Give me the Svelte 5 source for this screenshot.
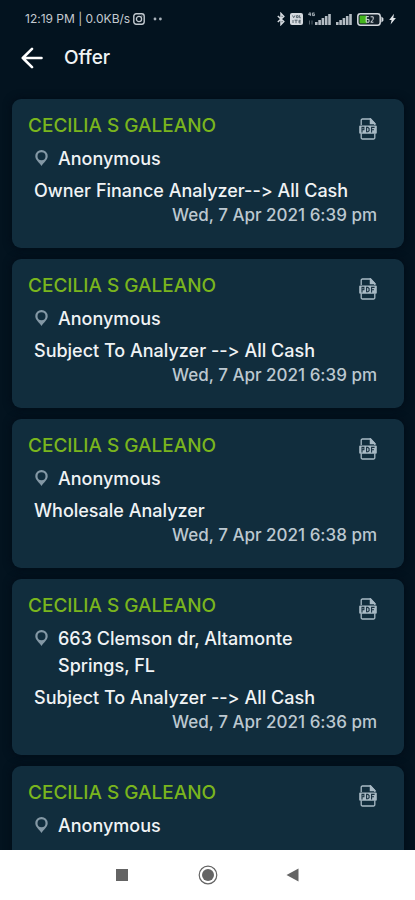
<script>
  const offers = [
    { id: 1, name: 'CECILIA S GALEANO', place: 'Anonymous', plan: 'Owner Finance Analyzer--> All Cash', date: 'Wed, 7 Apr 2021 6:39 pm' },
    { id: 2, name: 'CECILIA S GALEANO', place: 'Anonymous', plan: 'Subject To Analyzer --> All Cash', date: 'Wed, 7 Apr 2021 6:39 pm' },
    { id: 3, name: 'CECILIA S GALEANO', place: 'Anonymous', plan: 'Wholesale Analyzer', date: 'Wed, 7 Apr 2021 6:38 pm' },
    { id: 4, name: 'CECILIA S GALEANO', place: '663 Clemson dr, Altamonte Springs, FL', plan: 'Subject To Analyzer --> All Cash', date: 'Wed, 7 Apr 2021 6:36 pm' },
    { id: 5, name: 'CECILIA S GALEANO', place: 'Anonymous', plan: 'Owner Finance Analyzer--> All Cash', date: 'Wed, 7 Apr 2021 6:36 pm' },
  ];
  const bars = [3, 5, 7, 9, 11];
</script>

{#snippet signal()}
  <svg width="16" height="12" viewBox="0 0 16 12" aria-hidden="true">
    {#each bars as h, k (k)}<rect x={k * 3.3} y={12 - h} width="2.6" height={h} fill="#b4bcc3" />{/each}
  </svg>
{/snippet}

<div class="screen">
  <div class="status">
    <span class="clock">12:19 PM | 0.0KB/s</span>
    <svg class="cam" width="12" height="12" viewBox="0 0 12 12" fill="none" stroke="#c3cad0" aria-hidden="true">
      <rect x="0.8" y="0.8" width="10.4" height="10.4" rx="2.4" stroke-width="1.4" />
      <circle cx="6" cy="6" r="2.6" stroke-width="1.3" />
      <path d="M8.4 3h1" stroke-width="1.2" />
    </svg>
    <svg class="more" width="10" height="4" viewBox="0 0 10 4" fill="#a9b2ba" aria-hidden="true">
      <circle cx="2" cy="2" r="1.4" /><circle cx="7.4" cy="2" r="1.4" />
    </svg>
    <div class="icons">
      <svg width="8" height="14" viewBox="0 0 8 14" fill="none" stroke="#d5dadf" stroke-width="1.5" aria-hidden="true">
        <path d="M0.8 4l6 5.6L4 12.5v-11l2.8 2.9L0.8 10" />
      </svg>
      <svg width="13" height="12" viewBox="0 0 13 12" aria-hidden="true">
        <rect width="13" height="12" rx="2" fill="#d5dadf" />
        <path d="M2.5 2.5l1.2 2.2 1.2-2.2M6.4 2.7h1.8v1.9H6.4zM9.6 2.2v2.6h1.3M3 7v3M4.6 7.2h3M6 7.2v3M10.8 7.3H9v2.6h1.8M9 8.6h1.6" fill="none" stroke="#4b5963" stroke-width="0.9" />
      </svg>
      <div class="sim">
        <svg width="7" height="14" viewBox="0 0 7 14" fill="none" stroke="#a3adb5" stroke-width="1" aria-hidden="true">
          <path d="M1.8 0.4L0.5 2.6h2.4M2.3 0.6v3.4M6.5 1H4.4v2.6h2.1V2.2H5.4" />
          <path d="M1.5 12.5v-4M4 8.5v4" stroke="#56636d" />
        </svg>
        {@render signal()}
      </div>
      {@render signal()}
      <svg width="27" height="13" viewBox="0 0 27 13" aria-hidden="true">
        <rect x="0.8" y="0.8" width="22.4" height="11.4" rx="2.6" fill="#14212b" stroke="#d5dadf" stroke-width="1.5" />
        <path d="M24.4 3.6l2 1.6v2.6l-2 1.6z" fill="#d5dadf" />
        <rect x="2.6" y="2.6" width="7.4" height="7.8" fill="#43b51c" />
        <path d="M11.8 3.6H9.2v5.6h2.8V6.4H9.2M13.6 3.8h2.6v2.4l-2.4 3h2.6" fill="none" stroke="#d5dadf" stroke-width="1" />
      </svg>
      <svg width="7" height="12" viewBox="0 0 7 12" fill="#e2e6e9" aria-hidden="true">
        <path d="M5 0.8L0.2 6.9h2.4L1.6 11.6 6.9 5.1H4.3z" />
      </svg>
    </div>
  </div>

  <header>
    <button aria-label="Back">
      <svg width="22" height="22" viewBox="0 0 22 22" fill="none" stroke="#fff" stroke-width="2.6" stroke-linecap="round" stroke-linejoin="round">
        <path d="M20.5 11H1.8M11 1.8L1.8 11l9.2 9.2" />
      </svg>
    </button>
    <h1>Offer</h1>
  </header>

  <main>
    {#each offers as o (o.id)}
      <article>
        <div class="top">
          <h2>{o.name}</h2>
          <button class="pdf" aria-label="Open PDF">
            <svg width="18" height="22" viewBox="0 0 18 22" fill="none" stroke="#a9bac5" stroke-width="1.3">
              <path d="M2.2 7V2.2a1.2 1.2 0 0 1 1.2-1.2h8.2l4.2 4.4V7M2.2 15.5v4.3a1.2 1.2 0 0 0 1.2 1.2h11.2a1.2 1.2 0 0 0 1.2-1.2v-4.3" />
              <path d="M11.4 1v4.6h4.4z" fill="#a9bac5" />
              <rect x="0.2" y="7.6" width="17.6" height="8.2" rx="1" fill="#a9bac5" stroke="none" />
              <path d="M3 14.4V9.4h1.9v2.4H3M7.6 9.4v4.4h1.2l1.3-1.1v-2.2L8.8 9.4zM12.6 14.4V9.4h3M12.6 11.8h2.4" stroke="#17303f" stroke-width="1.1" />
            </svg>
          </button>
        </div>
        <div class="place">
          <svg width="14" height="18" viewBox="0 0 14 18" aria-hidden="true">
            <path fill="#8498a5" fill-rule="evenodd" d="M7.5 1a6.2 6.2 0 0 0-6.2 6.2C1.3 11 5.5 13.6 7.5 17c2-3.4 6.2-6 6.2-9.8A6.2 6.2 0 0 0 7.5 1zm0 2.2a4 4 0 1 1 0 8 4 4 0 0 1 0-8z" />
          </svg>
          <span>{o.place}</span>
        </div>
        <p class="plan">{o.plan}</p>
        <time>{o.date}</time>
      </article>
    {/each}
  </main>

  <nav>
    <button aria-label="Recent apps">
      <svg width="20" height="20" viewBox="0 0 20 20"><rect x="3" y="4" width="12" height="12" fill="#646464" /></svg>
    </button>
    <button aria-label="Home">
      <svg width="20" height="20" viewBox="0 0 20 20">
        <circle cx="10" cy="10" r="8.8" fill="none" stroke="#646464" stroke-width="1.2" />
        <circle cx="10" cy="10" r="6" fill="#646464" />
      </svg>
    </button>
    <button aria-label="Go back">
      <svg width="20" height="20" viewBox="0 0 20 20"><path d="M15.5 3.5v13L3.5 10z" fill="#646464" /></svg>
    </button>
  </nav>
</div>

<style>
  :global(body) { margin: 0; background: #03131f; }
  .screen { height: 100vh; display: flex; flex-direction: column; background: #03131f;
    font-family: Inter, "Noto Sans", sans-serif; color: #f0f3f5; overflow: hidden;
    font-variant-ligatures: none; font-feature-settings: "calt" 0; }
  button { background: none; border: none; padding: 0; cursor: pointer; display: flex; }
  h1, h2, p { margin: 0; }
  svg { flex: none; display: block; }

  .status { height: 38px; box-sizing: border-box; flex: none; display: flex; align-items: center; padding: 0 19px 0 25px; }
  .clock { font-size: 12px; line-height: 16px; color: #c3cad0; white-space: nowrap; }
  .cam { margin-left: 3px; }
  .more { margin-left: 8px; }
  .icons { margin-left: auto; display: flex; align-items: center; gap: 5px; }
  .sim { display: flex; align-items: center; }

  header { height: 40px; flex: none; display: flex; align-items: center; gap: 21px; padding: 0 21px; }
  h1 { font-size: 19px; line-height: 26px; font-weight: 500; }

  main { flex: 1; min-height: 0; overflow: hidden; display: flex; flex-direction: column; gap: 11px; padding: 21px 11px 0 12px; }
  article { flex: none; background: #112d3d; border-radius: 9px; padding: 14px 27px 21px 16px; box-shadow: 0 0 8px #010b16; }
  .top { display: flex; justify-content: space-between; align-items: flex-start; height: 26px; }
  h2 { font-size: 19px; line-height: 26px; font-weight: 500; color: #7ab51d; white-space: nowrap; }
  .pdf { padding-top: 5px; }
  .place { display: flex; align-items: flex-start; gap: 10px; margin: 6px 48px 6px 6px; font-size: 18px; line-height: 27px; font-weight: 550; }
  .place svg { margin-top: 4px; }
  .plan { margin-left: 6px; font-size: 18px; line-height: 25px; font-weight: 550; white-space: nowrap; }
  time { display: block; text-align: right; font-size: 17px; line-height: 24px; font-weight: 500; color: #bcc8d0; }

  nav { height: 50px; flex: none; background: #fff; display: flex; justify-content: center; align-items: center; gap: 65px; }
</style>
